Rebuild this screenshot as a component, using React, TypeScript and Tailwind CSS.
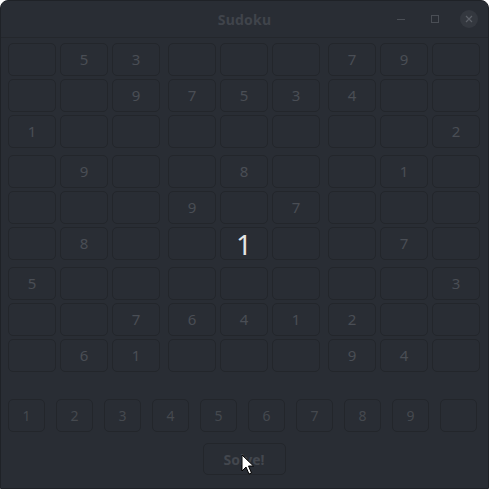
const board: (number | null)[][] = [
  [null, 5, 3, null, null, null, 7, 9, null],
  [null, null, 9, 7, 5, 3, 4, null, null],
  [1, null, null, null, null, null, null, null, 2],
  [null, 9, null, null, 8, null, null, 1, null],
  [null, null, null, 9, null, 7, null, null, null],
  [null, 8, null, null, 1, null, null, 7, null],
  [5, null, null, null, null, null, null, null, 3],
  [null, null, 7, 6, 4, 1, 2, null, null],
  [null, 6, 1, null, null, null, 9, 4, null],
];

const font = { fontFamily: '"Noto Sans", "DejaVu Sans", sans-serif' };

function Cell({ value, selected }: { value: number | null; selected: boolean }) {
  return (
    <div className="w-[48px] h-[33px] rounded-[5px] border border-[#23262b] flex items-center justify-center">
      {selected ? (
        <span className="text-[28px] leading-none text-[#e4e4e4]">{value}</span>
      ) : (
        <span className="text-[15px] leading-none text-[#4a4e55]">{value}</span>
      )}
    </div>
  );
}

function Cursor() {
  return (
    <svg className="absolute left-[240px] top-[453px]" width="14" height="22" viewBox="0 0 14 22">
      <path
        d="M1 1 L1 17 L5 13 L8 20 L10.5 19 L7.5 12 L12.5 12 Z"
        fill="#fff"
        stroke="#000"
        strokeWidth="1"
        strokeLinejoin="round"
      />
    </svg>
  );
}

export default function App() {
  const blocks = [0, 1, 2];
  return (
    <div
      className="relative w-[489px] h-[489px] bg-[#292d34] rounded-t-[8px] border border-[#1f2227] overflow-hidden"
      style={font}
    >
      <header className="relative h-[37px] border-b border-[#24272c] flex items-center justify-center">
        <span className="text-[14px] font-bold text-[#40444b] tracking-[0.2px]">Sudoku</span>
        <div className="absolute right-[10px] top-0 h-full flex items-center gap-[16px]">
          <div className="w-[18px] flex justify-center">
            <div className="w-[8px] h-px bg-[#4a4e55]" />
          </div>
          <div className="w-[18px] flex justify-center">
            <div className="w-[8px] h-[8px] border border-[#4a4e55]" />
          </div>
          <div className="w-[18px] h-[18px] rounded-full bg-[#34383f] flex items-center justify-center">
            <svg width="8" height="8" viewBox="0 0 8 8">
              <path d="M1 1 L7 7 M7 1 L1 7" stroke="#5c6067" strokeWidth="1.2" />
            </svg>
          </div>
        </div>
      </header>

      <div className="mt-[5px] ml-[7px] flex flex-col gap-[7px]">
        {blocks.map((br) => (
          <div key={br} className="flex flex-col gap-[3px]">
            {[0, 1, 2].map((r) => {
              const row = board[br * 3 + r];
              return (
                <div key={r} className="flex gap-[8px]">
                  {blocks.map((bc) => (
                    <div key={bc} className="flex gap-[4px]">
                      {[0, 1, 2].map((c) => {
                        const ri = br * 3 + r;
                        const ci = bc * 3 + c;
                        return (
                          <Cell key={c} value={row[ci]} selected={ri === 5 && ci === 4} />
                        );
                      })}
                    </div>
                  ))}
                </div>
              );
            })}
          </div>
        ))}
      </div>

      <div className="mt-[27px] ml-[7px] flex gap-[11px]">
        {[1, 2, 3, 4, 5, 6, 7, 8, 9, null].map((n, i) => (
          <button
            key={i}
            className="w-[37px] h-[33px] rounded-[5px] border border-[#23262b] flex items-center justify-center text-[14px] text-[#45494f]"
          >
            {n}
          </button>
        ))}
      </div>

      <div className="mt-[11px] flex justify-center">
        <button className="ml-[-1px] w-[83px] h-[32px] rounded-[5px] border border-[#23262b] text-[14px] font-bold text-[#43474e]">
          Solve!
        </button>
      </div>

      <Cursor />
    </div>
  );
}
